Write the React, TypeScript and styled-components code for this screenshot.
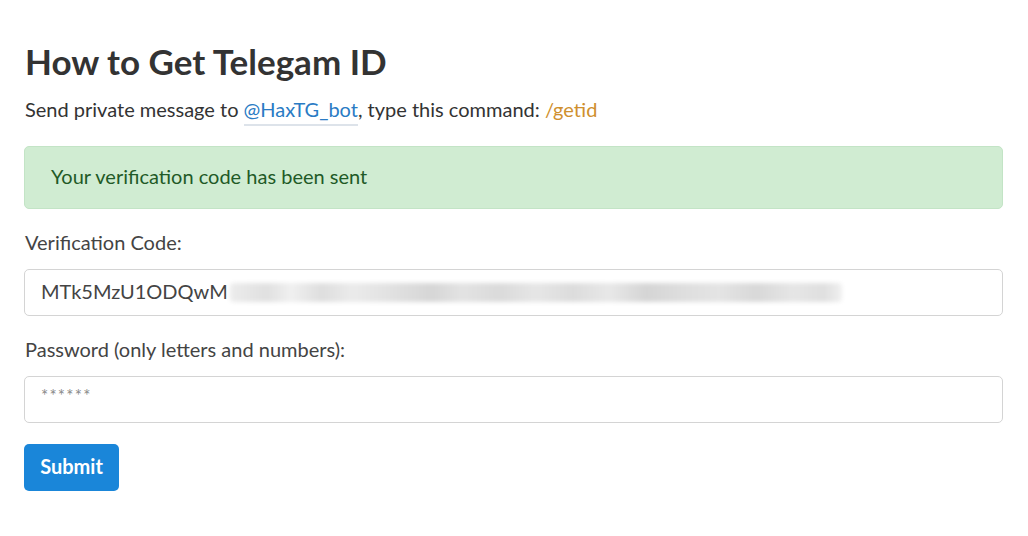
import React from "react";
import styled, { createGlobalStyle } from "styled-components";

const Global = createGlobalStyle`
  html, body { margin: 0; padding: 0; background: #ffffff; }
  body { font-family: Lato, "Open Sans", "Liberation Sans", sans-serif; color: #333333; }
`;

const Page = styled.main`
  padding: 38px 25px 0 24px;
  width: 979px;
`;

const Title = styled.h1`
  margin: 0 0 13px 1px;
  font-size: 35px;
  font-weight: 700;
  line-height: 46px;
  color: #333333;
`;

const Lead = styled.p`
  margin: 0 0 23px 1px;
  font-size: 20px;
  line-height: 24px;
  padding-bottom: 2px;
  color: #333333;
`;

const BotLink = styled.a`
  color: #2a7bc4;
  text-decoration: none;
  border-bottom: 2px solid #dde3ea;
  padding-bottom: 3px;
`;

const Cmd = styled.span`
  color: #cf8f2e;
`;

const Alert = styled.div`
  box-sizing: border-box;
  height: 63px;
  display: flex;
  align-items: center;
  padding: 0 26px 4px;
  background: #d0ecd2;
  border: 1px solid #c3e4c6;
  border-radius: 5px;
  color: #1f5a27;
  font-size: 20px;
  margin-bottom: 21px;
`;

const Field = styled.div`
  display: flex;
  flex-direction: column;
  gap: 15px;
  margin-bottom: 21px;
`;

const Label = styled.label`
  font-size: 20px;
  line-height: 24px;
  color: #444444;
  margin-left: 1px;
`;

const InputBox = styled.div`
  box-sizing: border-box;
  height: 47px;
  display: flex;
  align-items: center;
  padding: 0 16px 4px;
  border: 1px solid #d4d4d4;
  border-radius: 5px;
  background: #ffffff;
  font-size: 20px;
  color: #444444;
`;

const Placeholder = styled.span`
  color: #8a8a8a;
  font-size: 17px;
  letter-spacing: 1.2px;
  margin-top: -4px;
`;

const Blur = styled.span`
  display: inline-block;
  width: 612px;
  height: 19px;
  margin-left: 2px;
  margin-top: 4px;
  border-radius: 4px;
  filter: blur(2px);
  background: linear-gradient(
    90deg,
    #ececec 0%, #e0e0e0 6%, #f0f0f0 10%, #dedede 15%, #ebebeb 20%,
    #e0e0e0 27%, #d6d6d6 33%, #e3e3e3 38%, #dadada 44%, #e6e6e6 50%,
    #dcdcdc 56%, #e8e8e8 62%, #d5d5d5 68%, #dedede 74%, #e4e4e4 80%,
    #d8d8d8 86%, #e6e6e6 92%, #dfdfdf 97%, #f0f0f0 100%
  );
`;

const Button = styled.button`
  box-sizing: border-box;
  width: 95px;
  height: 47px;
  border: none;
  border-radius: 5px;
  padding: 0 0 3px;
  background: #1a86d9;
  color: #ffffff;
  font-family: inherit;
  font-size: 20px;
  font-weight: 700;
  cursor: pointer;
`;

export default function App() {
  return (
    <>
      <Global />
      <Page>
        <Title>How to Get Telegam ID</Title>
        <Lead>
          Send private message to <BotLink href="#">@HaxTG_bot</BotLink>, type this command: <Cmd>/getid</Cmd>
        </Lead>
        <Alert>Your verification code has been sent</Alert>
        <Field>
          <Label>Verification Code:</Label>
          <InputBox>
            MTk5MzU1ODQwM
            <Blur />
          </InputBox>
        </Field>
        <Field>
          <Label>Password (only letters and numbers):</Label>
          <InputBox>
            <Placeholder>******</Placeholder>
          </InputBox>
        </Field>
        <Button>Submit</Button>
      </Page>
    </>
  );
}
